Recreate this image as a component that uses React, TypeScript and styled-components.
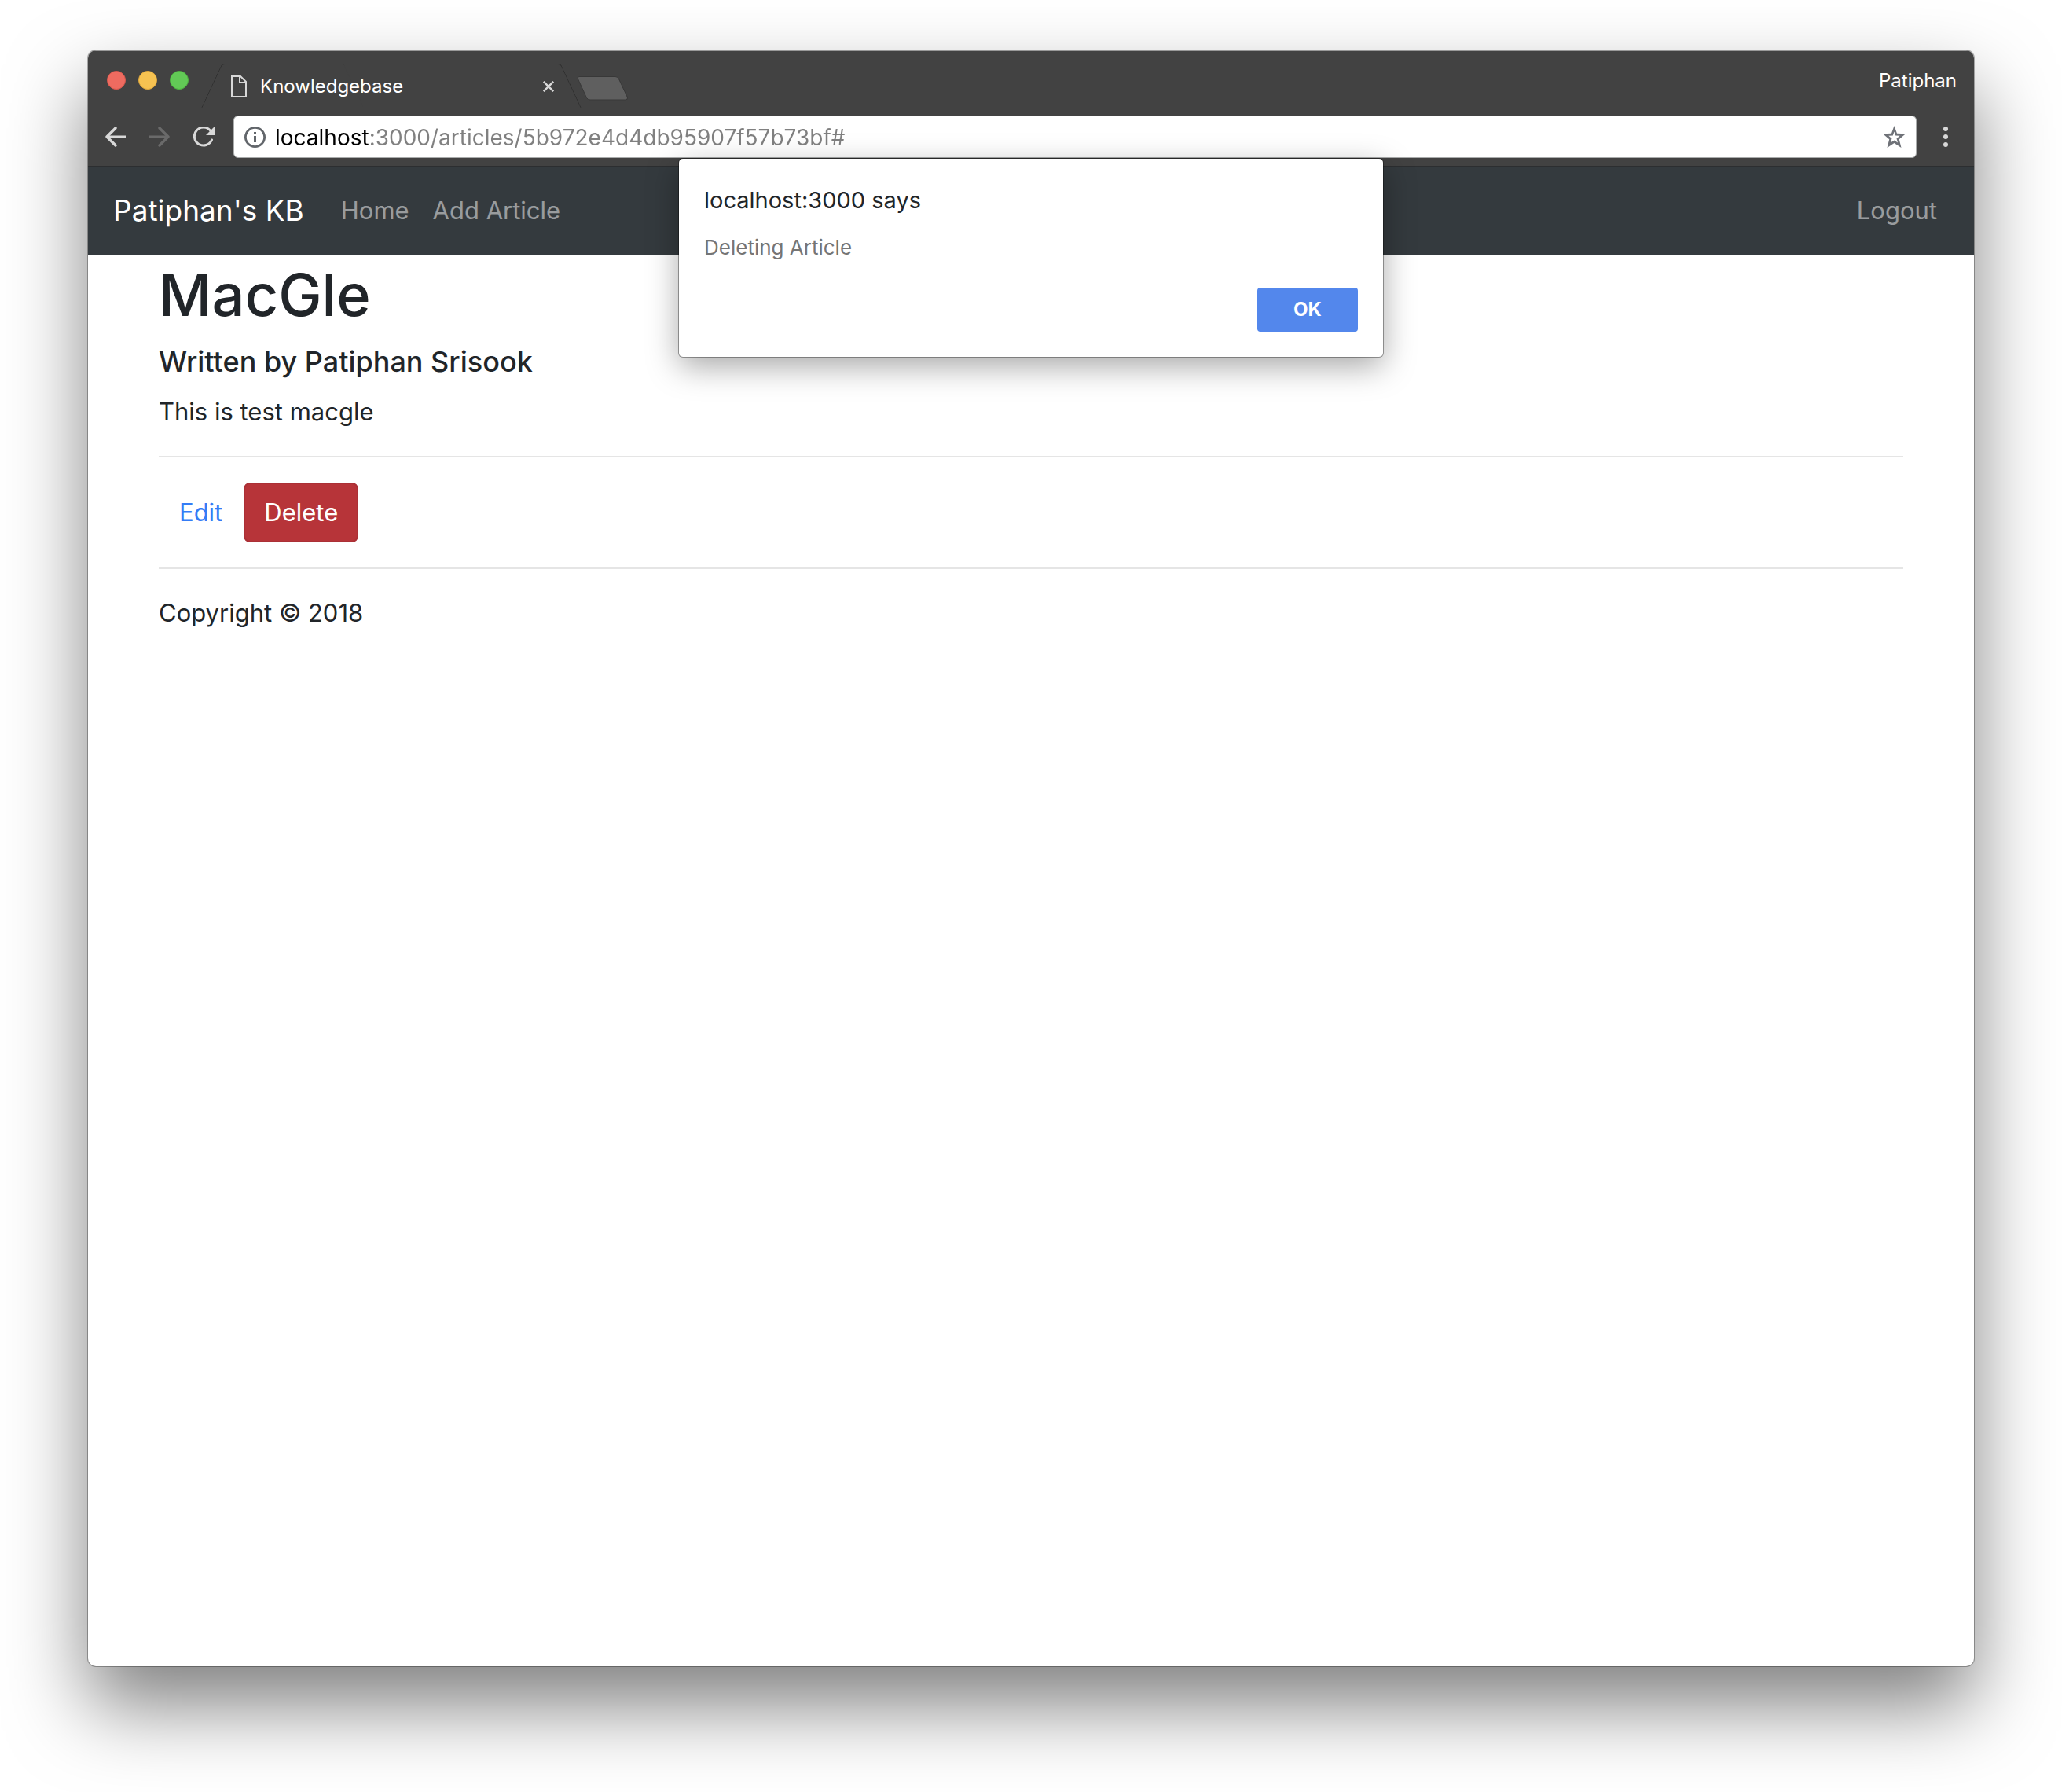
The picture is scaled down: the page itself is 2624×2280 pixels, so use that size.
import React, { useState } from 'react';
import styled, { createGlobalStyle } from 'styled-components';

const GlobalStyle = createGlobalStyle`
  *, *::before, *::after { box-sizing: border-box; }
  body {
    margin: 0;
    background: #fff;
    color: #212529;
    font-family: Inter, "Liberation Sans", sans-serif;
    font-size: 31px;
    line-height: 48px;
  }
  button, input { font: inherit; }
`;

const Desktop = styled.div`
  display: flex;
  min-height: 100vh;
  padding: 64px 112px 160px;
  overflow: hidden;
`;

const Window = styled.div`
  flex: 1;
  display: flex;
  flex-direction: column;
  min-width: 0;
  border-radius: 10px;
  overflow: hidden;
  background: #fff;
  box-shadow: 0 0 0 1px rgba(0, 0, 0, 0.3), 0 50px 100px rgba(0, 0, 0, 0.5);
`;

const TitleBar = styled.header`
  display: flex;
  align-items: center;
  height: 74px;
  padding: 2px 22px 0 24px;
  background: #424242;
  box-shadow: inset 0 1px #999, inset 0 -1px #8a8a8a;
`;

const Lights = styled.div`
  display: flex;
  gap: 16px;
  margin-right: 16px;
`;

const Light = styled.button<{ $fill: string; $edge: string }>`
  width: 24px;
  height: 24px;
  padding: 0;
  border: 1px solid ${(p) => p.$edge};
  border-radius: 50%;
  background: ${(p) => p.$fill};
`;

const Tab = styled.div`
  position: relative;
  isolation: isolate;
  align-self: flex-end;
  display: flex;
  align-items: center;
  width: 484px;
  height: 57px;
  padding: 0 35px 0 38px;

  &::before,
  &::after {
    content: '';
    position: absolute;
    z-index: -1;
    top: 0;
    bottom: 0;
    background: #424242;
    border-top: 1px solid #2d2d2d;
  }
  &::before {
    left: 13px;
    right: 50%;
    border-left: 1px solid #2d2d2d;
    border-top-left-radius: 4px;
    transform: skewX(-25deg);
  }
  &::after {
    left: 40%;
    right: 13px;
    border-right: 1px solid #2d2d2d;
    border-top-right-radius: 4px;
    transform: skewX(25deg);
  }
`;

const TabTitle = styled.span`
  flex: 1;
  margin-left: 17px;
  color: #fff;
  font-size: 24px;
  line-height: 32px;
`;

const IconButton = styled.button<{ $color?: string }>`
  display: flex;
  flex: none;
  align-items: center;
  justify-content: center;
  padding: 0;
  border: 0;
  background: none;
  color: ${(p) => p.$color ?? '#d8d8d8'};
`;

const NewTab = styled(IconButton)`
  align-self: flex-end;
  margin: 0 0 10px -6px;
`;

const Profile = styled(IconButton)`
  margin-left: auto;
  padding-top: 2px;
  font-size: 24px;
  line-height: 32px;
`;

const Toolbar = styled.div`
  display: flex;
  align-items: center;
  gap: 24px;
  height: 74px;
  padding: 9px 23px 10px 22px;
  background: #424242;
  border-bottom: 1px solid #2c2e30;
`;

const NavButtons = styled.div`
  display: flex;
  gap: 30px;
`;

const AddressBar = styled.label`
  flex: 1;
  display: flex;
  align-items: center;
  gap: 12px;
  height: 54px;
  padding: 0 13px;
  border: 1px solid #a9abab;
  border-radius: 6px;
  background: #fff;
  color: #62666b;
`;

const Url = styled.input`
  flex: 1;
  min-width: 0;
  height: 42px;
  padding: 2px 0 0;
  border: 0;
  outline: 0;
  font-size: 28px;
  line-height: 40px;
  color: #808080;
  background: linear-gradient(90deg, #000 120px, #808080 120px);
  background-clip: text;
  -webkit-text-fill-color: transparent;
`;

const Viewport = styled.div`
  position: relative;
  flex: 1;
`;

const Navbar = styled.nav`
  display: flex;
  align-items: center;
  height: 112px;
  padding: 0 32px;
  background: #343a3e;
`;

const Brand = styled.a`
  margin-right: 32px;
  color: #fff;
  font-size: 37px;
  text-decoration: none;
`;

const NavLink = styled.a<{ $end?: boolean }>`
  margin-left: ${(p) => (p.$end ? 'auto' : '0')};
  padding: 16px 15px;
  color: rgba(255, 255, 255, 0.5);
  text-decoration: none;
`;

const Container = styled.main`
  max-width: 2280px;
  margin: 0 auto;
  padding: 0 30px;
`;

const Title = styled.h1`
  margin: 0 0 10px;
  font-size: 74px;
  font-weight: 500;
  line-height: 102px;
`;

const Author = styled.h5`
  margin: 0 0 16px;
  font-size: 36px;
  font-weight: 500;
  line-height: 48px;
`;

const Text = styled.p`
  margin: 0;
`;

const Rule = styled.hr`
  margin: 32px 0;
  border: 0;
  border-top: 2px solid #e5e5e5;
`;

const Actions = styled.div`
  display: flex;
`;

const EditLink = styled.a`
  padding: 14px 27px 14px 26px;
  color: #347cf6;
  text-decoration: none;
`;

const DeleteButton = styled.button`
  padding: 12px 24px;
  border: 2px solid #ab3036;
  border-radius: 8px;
  background: #b73439;
  color: #fff;
`;

const Dialog = styled.div`
  position: absolute;
  z-index: 1;
  top: -10px;
  left: 50%;
  transform: translateX(-50%);
  display: flex;
  flex-direction: column;
  width: 896px;
  padding: 32px;
  border-radius: 5px;
  background: #fff;
  box-shadow: 0 0 0 1px rgba(0, 0, 0, 0.35), 0 12px 40px rgba(0, 0, 0, 0.35);
`;

const DialogTitle = styled.h2`
  margin: 0 0 20px;
  font-size: 29px;
  font-weight: 400;
  line-height: 42px;
`;

const DialogText = styled.p`
  margin: 0 0 32px;
  color: #757575;
  font-size: 26px;
  line-height: 38px;
`;

const OkButton = styled.button`
  align-self: flex-end;
  width: 128px;
  height: 56px;
  padding: 0;
  border: 0;
  border-radius: 4px;
  background: #5387ec;
  color: #fff;
  font-size: 24px;
  font-weight: 700;
`;

const lights = [
  { label: 'Close window', fill: '#ee6b60', edge: '#d9574c' },
  { label: 'Minimise window', fill: '#f6c251', edge: '#dfa73c' },
  { label: 'Zoom window', fill: '#62c956', edge: '#4db03f' },
];

export default function App() {
  const [url, setUrl] = useState('localhost:3000/articles/5b972e4d4db95907f57b73bf#');

  return (
    <>
      <GlobalStyle />
      <Desktop>
        <Window>
          <TitleBar>
            <Lights>
              {lights.map((l) => (
                <Light key={l.label} aria-label={l.label} $fill={l.fill} $edge={l.edge} />
              ))}
            </Lights>
            <Tab>
              <svg width="20" height="28" viewBox="0 0 20 28" fill="none" stroke="#d8d8d8" strokeWidth="2">
                <path d="M1 1H12L19 8V27H1Z" />
                <path d="M11 1V9H19" />
              </svg>
              <TabTitle>Knowledgebase</TabTitle>
              <IconButton aria-label="Close tab">
                <svg width="14" height="14" viewBox="0 0 14 14" stroke="currentColor" strokeWidth="2.4">
                  <path d="M0.8 0.8L13.2 13.2M13.2 0.8L0.8 13.2" />
                </svg>
              </IconButton>
            </Tab>
            <NewTab aria-label="New tab">
              <svg width="66" height="32" viewBox="0 0 66 32">
                <path
                  d="M3 1.500H49Q52 1.500 53.500 4.500L64.500 28Q65 31 62 31H17Q14 31 12.500 28.500L1.500 4.500Q0.500 1.500 3 1.500Z"
                  fill="#5f5f5f"
                  stroke="#383838"
                />
              </svg>
            </NewTab>
            <Profile $color="#fff">Patiphan</Profile>
          </TitleBar>

          <Toolbar>
            <NavButtons>
              <IconButton aria-label="Back">
                <svg width="26" height="26" viewBox="0 0 26 26" fill="none" stroke="currentColor" strokeWidth="3">
                  <path d="M2 13H26" />
                  <path d="M13 2L2 13L13 24" strokeWidth="3.400" strokeLinecap="round" strokeLinejoin="round" />
                </svg>
              </IconButton>
              <IconButton aria-label="Forward" $color="#6a6a6a">
                <svg width="26" height="26" viewBox="0 0 26 26" fill="none" stroke="currentColor" strokeWidth="3">
                  <path d="M0 13H24" />
                  <path d="M13 2L24 13L13 24" strokeWidth="3.400" strokeLinecap="round" strokeLinejoin="round" />
                </svg>
              </IconButton>
              <IconButton aria-label="Reload">
                <svg width="27" height="26" viewBox="0 0 27 26" fill="none">
                  <path
                    d="M22 5.500A11.500 11.500 0 1 0 23.500 17"
                    stroke="currentColor"
                    strokeWidth="3"
                    strokeLinecap="round"
                  />
                  <path d="M27 0V11H16Z" fill="currentColor" />
                </svg>
              </IconButton>
            </NavButtons>
            <AddressBar>
              <svg width="27" height="27" viewBox="0 0 27 27">
                <circle cx="13.500" cy="13.500" r="12.100" fill="none" stroke="currentColor" strokeWidth="2.800" />
                <path d="M12 7H15V10H12ZM12 12H15V20H12Z" fill="currentColor" />
              </svg>
              <Url aria-label="Address" value={url} onChange={(e) => setUrl(e.target.value)} />
              <IconButton aria-label="Bookmark this page" $color="#6f7278">
                <svg width="29" height="28" viewBox="0 0 29 28" fill="currentColor">
                  <path
                    fillRule="evenodd"
                    d="M14.500 0L18 9.700L29 10.300L20.800 17.200L23.500 28L14.500 22L5.500 28L8.200 17.200L0 10.300L11 9.700ZM14.500 7.500L12.800 12.500L7.300 12.800L11.500 16.300L10 21.500L14.500 18.500L19 21.500L17.500 16.300L21.700 12.800L16.200 12.500Z"
                  />
                </svg>
              </IconButton>
            </AddressBar>
            <IconButton aria-label="Menu">
              <svg width="26" height="26" viewBox="0 0 26 26" fill="currentColor">
                <circle cx="13" cy="3" r="3" />
                <circle cx="13" cy="13" r="3" />
                <circle cx="13" cy="23" r="3" />
              </svg>
            </IconButton>
          </Toolbar>

          <Viewport>
            <Navbar>
              <Brand href="#">Patiphan's KB</Brand>
              <NavLink href="#">Home</NavLink>
              <NavLink href="#">Add Article</NavLink>
              <NavLink href="#" $end>
                Logout
              </NavLink>
            </Navbar>
            <Container>
              <Title>MacGle</Title>
              <Author>Written by Patiphan Srisook</Author>
              <Text>This is test macgle</Text>
              <Rule />
              <Actions>
                <EditLink href="#">Edit</EditLink>
                <DeleteButton>Delete</DeleteButton>
              </Actions>
              <Rule />
              <Text as="footer">Copyright © 2018</Text>
            </Container>
            <Dialog role="alertdialog" aria-labelledby="alert-title" aria-describedby="alert-text">
              <DialogTitle id="alert-title">localhost:3000 says</DialogTitle>
              <DialogText id="alert-text">Deleting Article</DialogText>
              <OkButton>OK</OkButton>
            </Dialog>
          </Viewport>
        </Window>
      </Desktop>
    </>
  );
}
